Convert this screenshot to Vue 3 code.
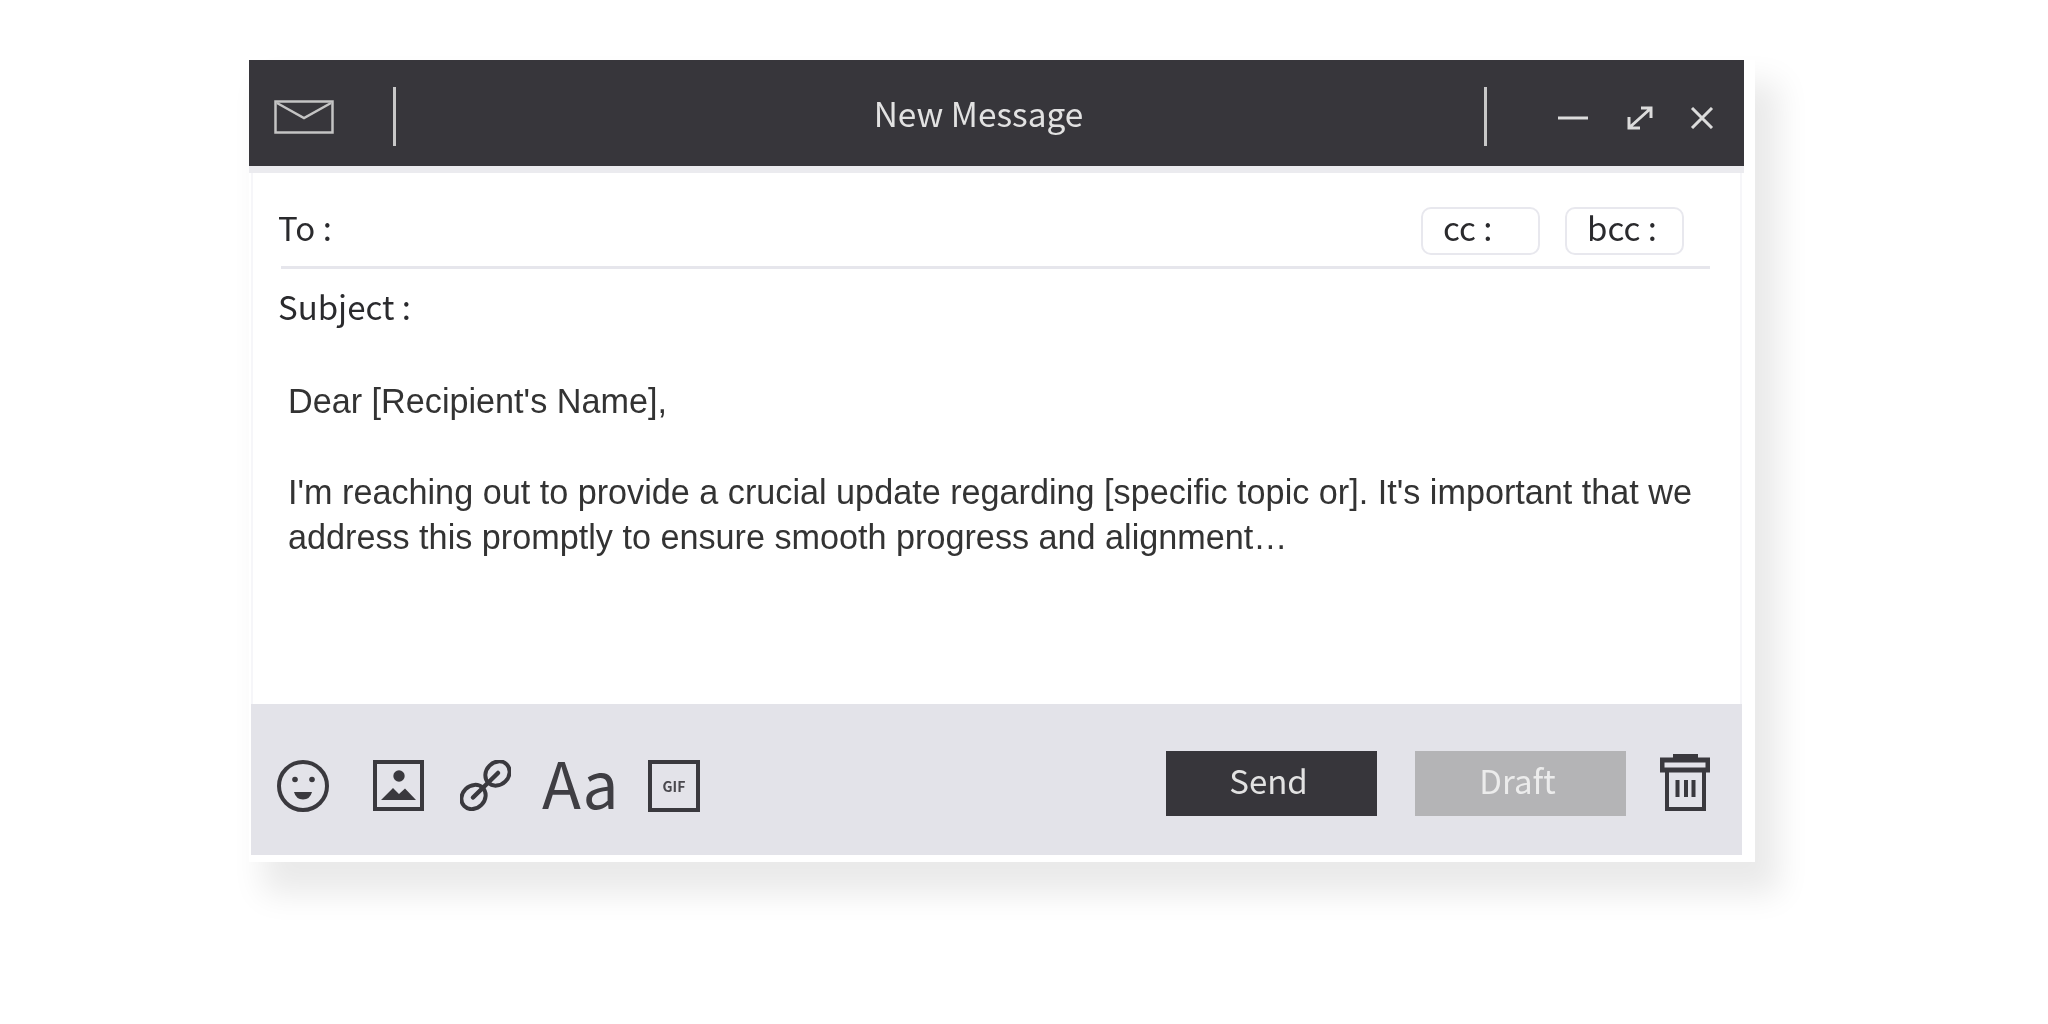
<script setup>
const paragraphs = [
  "Dear [Recipient's Name],",
  "I'm reaching out to provide a crucial update regarding [specific topic or]. It's important that we address this promptly to ensure smooth progress and alignment…",
]
</script>

<template>
  <div class="page">
    <section class="card">
      <header class="titlebar">
        <svg class="envelope" viewBox="0 0 60 34" width="60" height="34">
          <rect x="1.5" y="1.5" width="57" height="31" fill="none" stroke="#c4c4c4" stroke-width="2.5" />
          <path d="M3 3 L30 18 L57 3" fill="none" stroke="#c4c4c4" stroke-width="2.5" />
        </svg>
        <i class="divider first"></i>
        <h1 class="title">New Message</h1>
        <i class="divider"></i>
        <svg class="win minimize" viewBox="0 0 30 4" width="30" height="4">
          <path d="M0 2 H30" stroke="#dcdcdc" stroke-width="3" />
        </svg>
        <svg class="win expand" viewBox="0 0 26 24" width="26" height="24">
          <path d="M3 21 L23 3 M14 2 H24 V12 M2 11 V22 H13" fill="none" stroke="#dcdcdc" stroke-width="3" />
        </svg>
        <svg class="win close" viewBox="0 0 24 22" width="24" height="22">
          <path d="M2 1 L22 21 M22 1 L2 21" fill="none" stroke="#dcdcdc" stroke-width="3" />
        </svg>
      </header>
      <div class="band"></div>
      <main class="body">
        <div class="to-row">
          <span class="label to-label">To :</span>
          <span class="chip">cc :</span>
          <span class="chip">bcc :</span>
        </div>
        <div class="label subject">Subject :</div>
        <div class="message">
          <p v-for="(text, i) in paragraphs" :key="i">{{ text }}</p>
        </div>
      </main>
      <footer class="toolbar">
        <svg class="tool smile" viewBox="0 0 52 52" width="52" height="52">
          <circle cx="26" cy="26" r="24" fill="none" stroke="#3a393e" stroke-width="4" />
          <circle cx="18" cy="19.5" r="2.8" fill="#3a393e" />
          <circle cx="35" cy="19.5" r="2.8" fill="#3a393e" />
          <path d="M17 32 H35 Q33 39.5 26 39.5 Q19 39.5 17 32 Z" fill="#3a393e" />
        </svg>
        <svg class="tool picture" viewBox="0 0 51 51" width="51" height="51">
          <rect x="2" y="2" width="47" height="47" fill="none" stroke="#3a393e" stroke-width="4" />
          <circle cx="26" cy="16" r="5.7" fill="#3a393e" />
          <path d="M8 40 L20 28 L26 34 L32 28.5 L43 40 Z" fill="#3a393e" />
        </svg>
        <svg class="tool link" viewBox="0 0 51 51" width="51" height="51">
          <ellipse cx="13.5" cy="37" rx="13" ry="11.2" transform="rotate(-45 13.5 37)" fill="none" stroke="#3a393e" stroke-width="4" />
          <ellipse cx="37.5" cy="13.5" rx="13" ry="11.2" transform="rotate(-45 37.5 13.5)" fill="none" stroke="#3a393e" stroke-width="4" />
          <path d="M13 37.5 L38 13" fill="none" stroke="#3a393e" stroke-width="4.5" stroke-linecap="round" />
        </svg>
        <span class="aa">Aa</span>
        <span class="gif">GIF</span>
        <button class="btn send">Send</button>
        <button class="btn draft">Draft</button>
        <svg class="trash" viewBox="0 0 50 57" width="50" height="57">
          <path d="M14 5 V1 H37 V5 Z" fill="#3a393e" stroke="#3a393e" stroke-width="2" />
          <rect x="2" y="6" width="46" height="10" fill="none" stroke="#3a393e" stroke-width="5" />
          <path d="M7 16 V55 H44 V16" fill="none" stroke="#3a393e" stroke-width="4" />
          <path d="M17.5 26 V43 M26 26 V43 M33.5 26 V43" stroke="#3a393e" stroke-width="4" />
        </svg>
      </footer>
    </section>
  </div>
</template>

<style scoped>
.page {
  width: 2048px;
  height: 1024px;
  box-sizing: border-box;
  padding: 60px 0 0 249px;
  background: #fff;
  overflow: hidden;
  filter: blur(0.7px);
  font-family: "Noto Sans CJK SC", "Noto Sans", sans-serif;
}
.card {
  width: 1506px;
  height: 802px;
  box-sizing: border-box;
  padding-bottom: 7px;
  display: flex;
  flex-direction: column;
  background: #fff;
  box-shadow: 19px 27px 30px 5px rgba(0, 0, 0, 0.085);
}
.titlebar {
  width: 1495px;
  height: 106px;
  flex: none;
  box-sizing: border-box;
  padding-right: 30px;
  display: flex;
  align-items: center;
  background: #37363b;
}
.envelope {
  margin-left: 25px;
  margin-top: 7px;
}
.divider {
  width: 3px;
  height: 59px;
  margin-top: 7px;
  background: #c8c8c8;
}
.divider.first {
  margin-left: 59px;
}
.title {
  flex: 1;
  margin: -2px 0 0;
  padding-left: 77px;
  text-align: center;
  font-size: 33.4px;
  font-weight: 400;
  color: #e2e2e2;
}
.win { flex: none; }
.minimize { margin-left: 71px; margin-top: 9px; }
.expand { margin-left: 39px; margin-top: 10px; }
.close { margin-left: 37px; margin-top: 10px; }
.band {
  width: 1495px;
  height: 7px;
  flex: none;
  background: #ebebef;
}
.body {
  width: 1491px;
  margin-left: 2px;
  flex: 1;
  box-sizing: border-box;
  border-left: 2px solid #f6f6f9;
  border-right: 2px solid #f6f6f9;
}
.to-row {
  height: 96px;
  box-sizing: border-box;
  margin: 0 30px 0 28px;
  padding-right: 26px;
  display: flex;
  align-items: center;
  gap: 25px;
  border-bottom: 3px solid #e6e6ec;
}
.label {
  font-size: 33px;
  color: #2a2a2d;
}
.to-label {
  flex: 1;
  margin-left: -3px;
  margin-top: 14px;
}
.chip {
  width: 119px;
  height: 48px;
  box-sizing: border-box;
  border: 2px solid #e8e8ee;
  border-radius: 10px;
  padding-left: 20px;
  font-size: 33px;
  line-height: 36px;
  color: #2a2a2d;
  margin-top: 23px;
}
.subject {
  margin: 7px 0 0 25px;
  line-height: 60px;
}
.message {
  margin: 43px 0 0 35px;
  width: 1440px;
  font-family: "Liberation Sans", Arial, sans-serif;
  font-size: 34.2px;
  line-height: 45.5px;
  color: #333;
}
.message p {
  margin: 0 0 45px;
}
.toolbar {
  width: 1491px;
  height: 151px;
  margin-left: 2px;
  flex: none;
  box-sizing: border-box;
  padding: 0 32px 0 26px;
  display: flex;
  align-items: center;
  background: #e3e3e9;
}
.tool { flex: none; margin-top: 12px; }
.picture { margin-left: 44px; }
.link { margin-left: 36px; }
.aa {
  margin-left: 31px;
  width: 72px;
  font-size: 64px;
  line-height: 51px;
  font-weight: 400;
  color: #3f3e43;
  margin-top: 4px;
}
.gif {
  margin-left: 34px;
  width: 52px;
  height: 52px;
  margin-top: 12px;
  box-sizing: border-box;
  border: 4px solid #3a393e;
  text-align: center;
  font-size: 14px;
  font-weight: 700;
  line-height: 44px;
  color: #4a494e;
}
.btn {
  width: 211px;
  height: 65px;
  border: 0;
  padding: 0 6px 6px 0;
  font-family: inherit;
  font-size: 33px;
  line-height: 1;
}
.send {
  margin-left: auto;
  background: #37363b;
  color: #e2e2e2;
  margin-top: 8px;
}
.draft {
  margin-left: 38px;
  background: #b4b4b6;
  color: #ececec;
  margin-top: 8px;
}
.trash {
  margin-left: 34px;
  margin-top: 6px;
}
</style>

<style>
html, body { margin: 0; background: #fff; }
</style>
